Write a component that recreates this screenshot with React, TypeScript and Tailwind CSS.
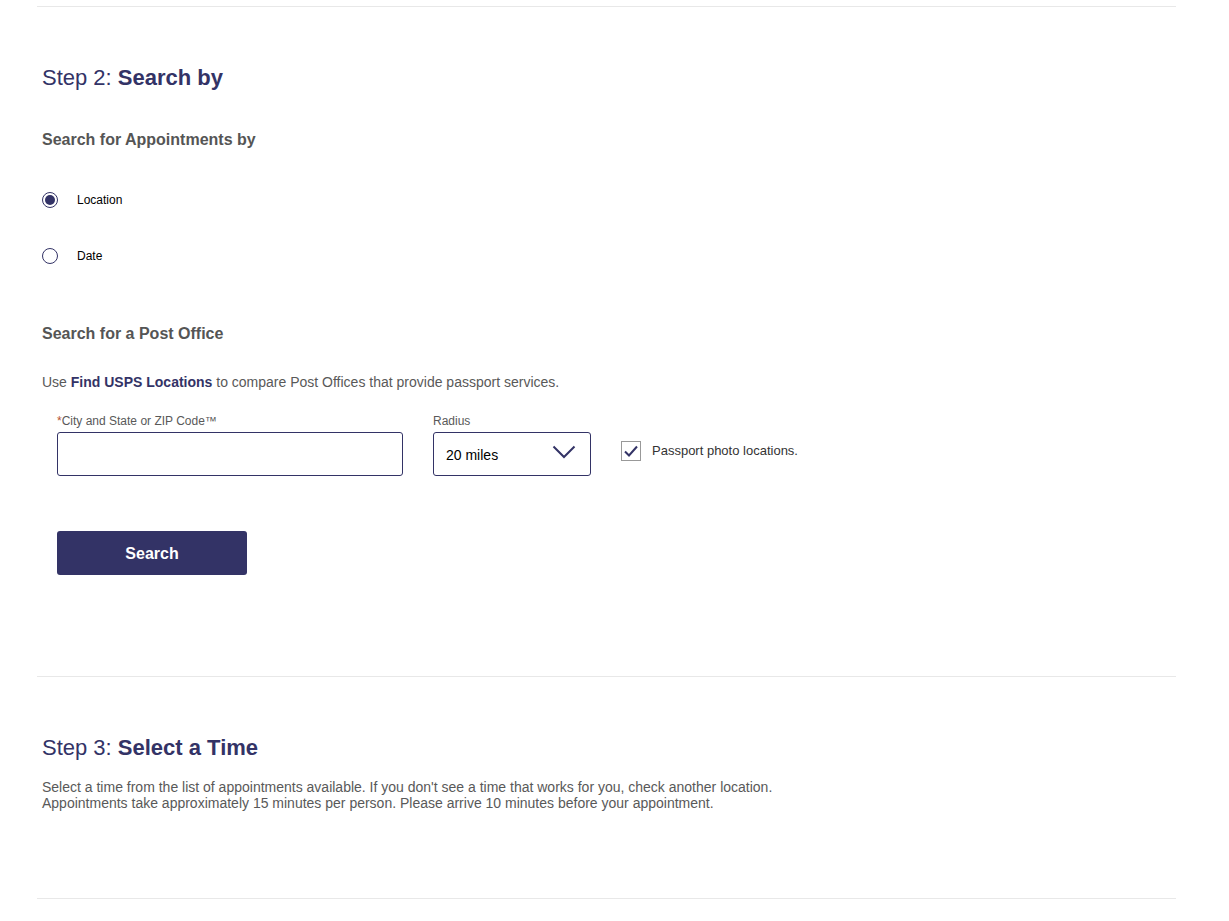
import React from "react";

function Radio({ checked, label }: { checked: boolean; label: string }) {
  return (
    <div className="flex items-center h-[20px]">
      <span className="w-[16px] h-[16px] rounded-full border border-[#333366] flex items-center justify-center bg-white">
        {checked && <span className="w-[10px] h-[10px] rounded-full bg-[#333366]" />}
      </span>
      <span className="ml-[19px] text-[12px] text-black leading-[14px]">{label}</span>
    </div>
  );
}

export default function App() {
  return (
    <div className="bg-white min-h-[921px] pt-[6px] font-['Liberation_Sans',Arial,sans-serif]">
      <div className="ml-[37px] w-[1139px]">
        <div className="border-t border-[#e8e8e8]" />
        <div className="pl-[5px]">
          <h2 className="mt-[58px] text-[22px] leading-[26px] text-[#333366]">
            Step 2: <span className="font-bold">Search by</span>
          </h2>
          <h3 className="mt-[39px] text-[16px] leading-[20px] font-bold text-[#555555]">
            Search for Appointments by
          </h3>
          <div className="mt-[40px]">
            <Radio checked label="Location" />
          </div>
          <div className="mt-[36px]">
            <Radio checked={false} label="Date" />
          </div>
          <h3 className="mt-[58px] text-[16px] leading-[20px] font-bold text-[#555555]">
            Search for a Post Office
          </h3>
          <p className="mt-[29px] text-[14px] leading-[18px] text-[#595959]">
            Use <span className="font-bold text-[#333366]">Find USPS Locations</span> to compare Post Offices that provide passport services.
          </p>
          <div className="mt-[23px] pl-[15px] flex items-start">
            <div className="flex flex-col">
              <label className="text-[12px] leading-[14px] text-[#595959]">
                <span className="text-[#b5532f]">*</span>City and State or ZIP Code™
              </label>
              <input className="mt-[4px] w-[346px] h-[44px] border border-[#333366] rounded-[3px] px-[10px] text-[14px] outline-none" />
            </div>
            <div className="flex flex-col ml-[30px]">
              <label className="text-[12px] leading-[14px] text-[#595959]">Radius</label>
              <div className="mt-[4px] w-[158px] h-[44px] border border-[#333366] rounded-[3px] flex items-center justify-between pl-[12px] pr-[14px]">
                <span className="text-[14px] text-black mt-[2px]">20 miles</span>
                <svg width="24" height="14" viewBox="0 0 24 14" className="mb-[5px]">
                  <path d="M1.5 1.5 L12 12 L22.5 1.5" fill="none" stroke="#333366" strokeWidth="2" />
                </svg>
              </div>
            </div>
            <div className="ml-[30px] mt-[27px] flex items-center">
              <span className="w-[20px] h-[20px] border border-[#999999] bg-white flex items-center justify-center">
                <svg width="16" height="14" viewBox="0 0 16 14">
                  <path d="M2 7.5 L6 11.5 L14 2.5" fill="none" stroke="#333366" strokeWidth="2" />
                </svg>
              </span>
              <span className="ml-[11px] text-[13px] leading-[16px] text-[#333333]">Passport photo locations.</span>
            </div>
          </div>
          <div className="pl-[15px] mt-[55px]">
            <button className="w-[190px] h-[44px] bg-[#333366] rounded-[3px] text-white font-bold text-[16px] pt-[2px]">
              Search
            </button>
          </div>
        </div>
        <div className="mt-[101px] border-t border-[#e8e8e8]" />
        <div className="pl-[5px]">
          <h2 className="mt-[58px] text-[22px] leading-[26px] text-[#333366]">
            Step 3: <span className="font-bold">Select a Time</span>
          </h2>
          <p className="mt-[18px] text-[14px] leading-[16px] text-[#595959]">
            Select a time from the list of appointments available. If you don't see a time that works for you, check another location.
            <br />
            Appointments take approximately 15 minutes per person. Please arrive 10 minutes before your appointment.
          </p>
        </div>
        <div className="mt-[87px] border-t border-[#e8e8e8]" />
      </div>
    </div>
  );
}
